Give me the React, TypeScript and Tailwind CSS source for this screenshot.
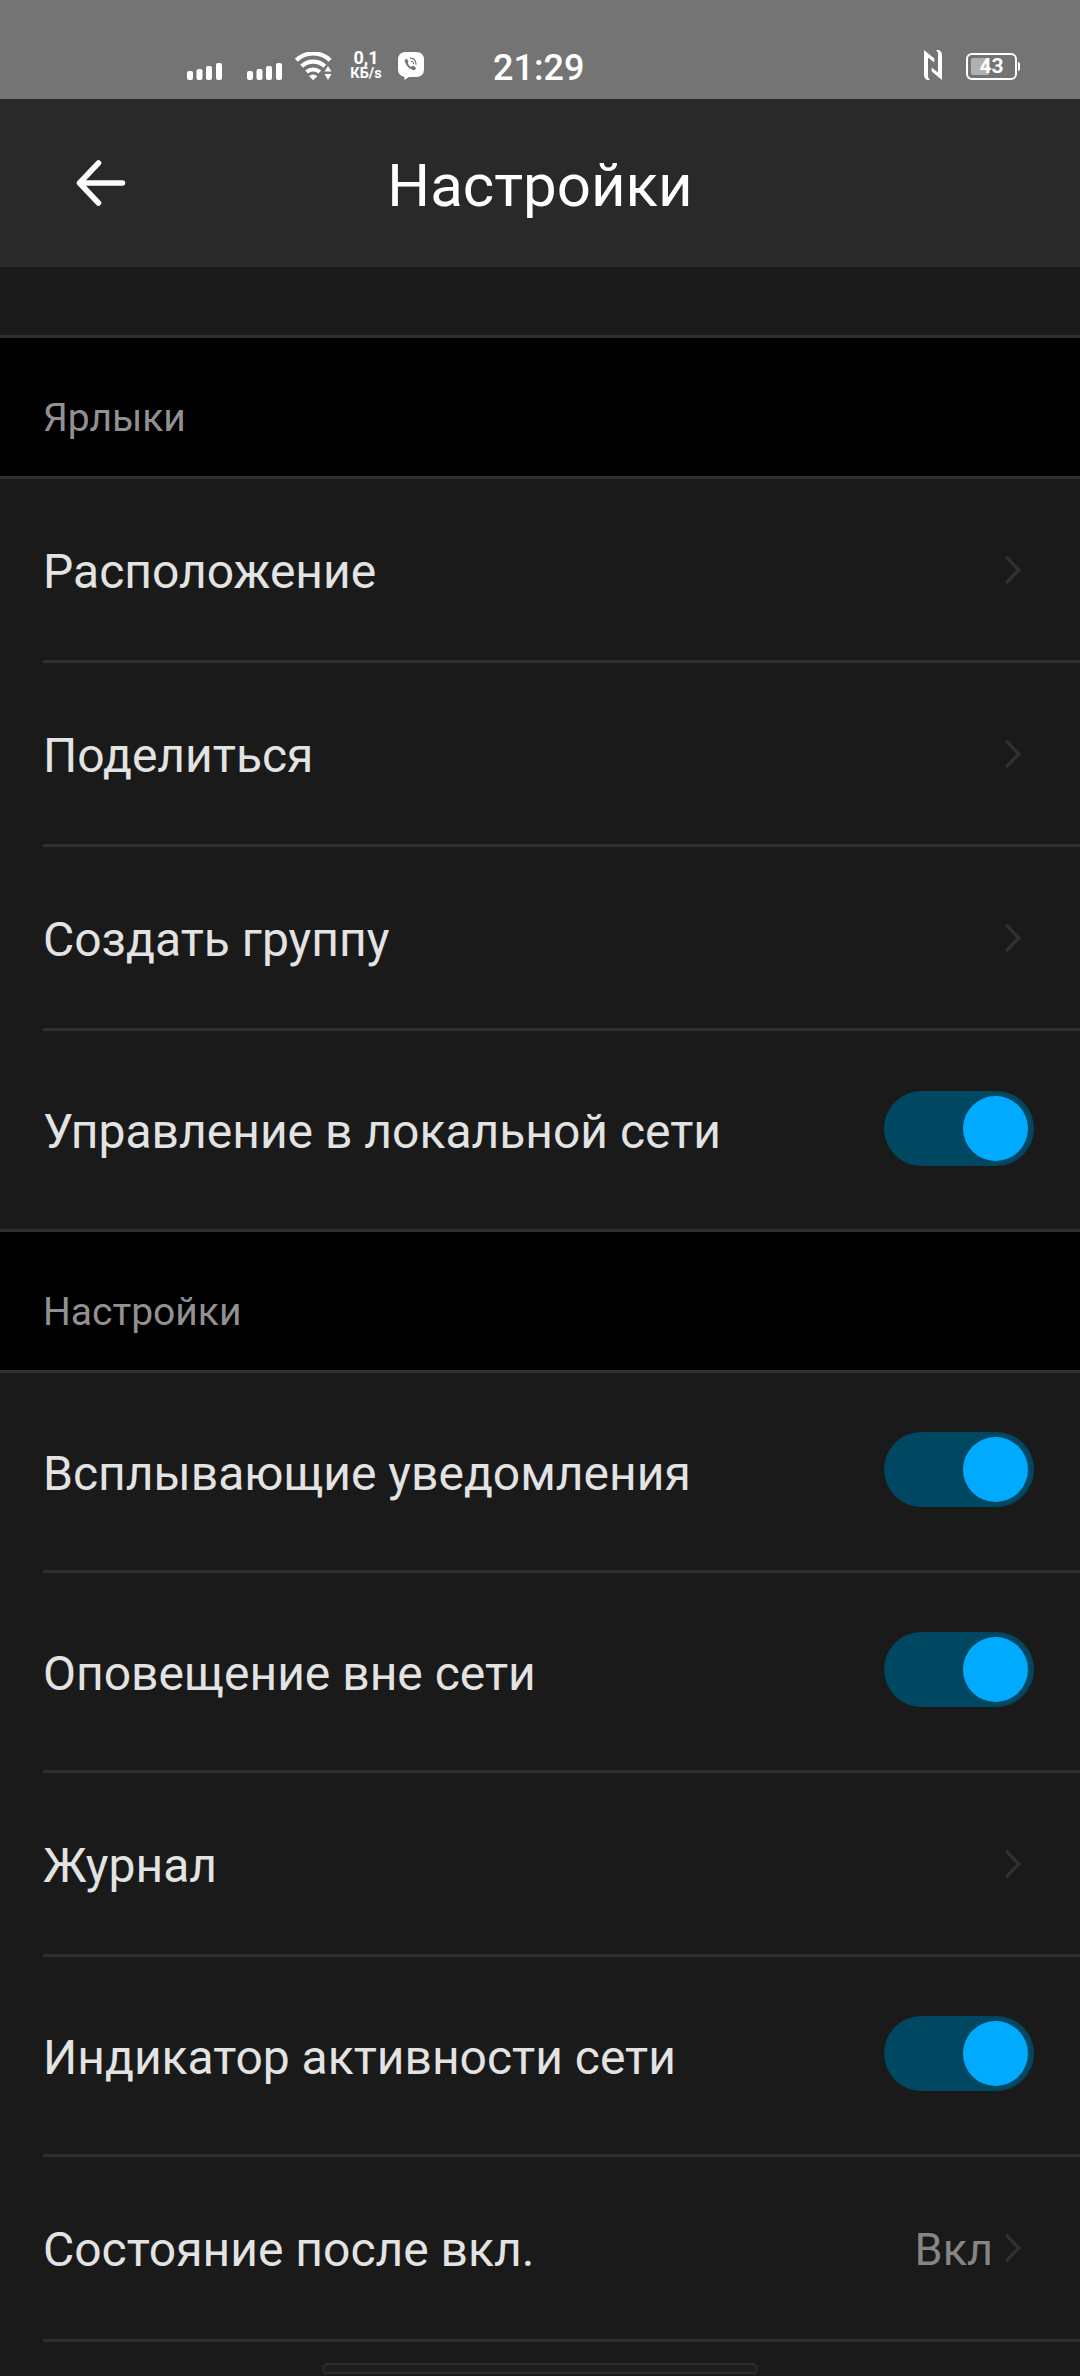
import React from 'react';

const signalBars = [
  { x: 0, h: 9 },
  { x: 9.5, h: 11 },
  { x: 19, h: 14 },
  { x: 29, h: 17 },
];

function Signal() {
  return (
    <svg width="36" height="17" viewBox="0 0 36 17" fill="#fff">
      {signalBars.map((b) => (
        <rect key={b.x} x={b.x} y={17 - b.h} width="6" height={b.h} rx="2" />
      ))}
    </svg>
  );
}

function Wifi() {
  return (
    <svg width="37" height="29" viewBox="0 0 37 29" fill="none" stroke="#fff" strokeWidth="4.2">
      <path d="M1.3 8.2a24.5 24.5 0 0 1 33.8 0" />
      <path d="M6.6 14.2a17 17 0 0 1 23.2 0" />
      <path d="M11.6 20a10 10 0 0 1 13.2 0" />
      <path d="M14 24q4.2-3 8.4 0L18.2 28.200z" fill="#fff" stroke="none" />
      <path d="M29.500 19.500h7L33 14zM29.500 22h7L33 28z" fill="#fff" stroke="none" />
    </svg>
  );
}

function Viber() {
  return (
    <svg width="26" height="28" viewBox="0 0 26 28">
      <path
        d="M8 0h10q8 0 8 8v9q0 8-8 8h-7l-4.600 3v-3.200Q0 24 0 17V8Q0 0 8 0z"
        fill="#fff"
      />
      <path
        d="M8.300 6.400l2 2.400q.5.800-.7 1.900c.7 2 1.800 3.300 3.900 4.100 1-1.300 1.600-1.200 2.400-.6l2 1.500q.6.700-.9 2.100c-.8.700-1.600.5-2.700 0-3.700-1.700-6.300-4.400-7.400-8-.3-1.200-.2-1.800.6-2.400z"
        fill="#747474"
      />
      <path d="M12.500 6.200q5.300.3 5.500 6M13.200 9q2.200.3 2.400 2.600" fill="none" stroke="#747474" strokeWidth="1.200" strokeLinecap="round" />
    </svg>
  );
}

function Nfc() {
  return (
    <svg width="18" height="30" viewBox="0 0 18 30" fill="#fff">
      <path d="M0 0L10.300 8.500V12.500L4 7.500V26Q4 28.500 6 30H3.500Q0 29 0 25z" />
      <path d="M18 30L7.700 21.500V17.500L14 22.500V4Q14 1.500 12 0H14.500Q18 1 18 5z" />
    </svg>
  );
}

function Battery() {
  return (
    <div className="flex items-center">
      <div className="relative flex h-[27px] w-[51px] items-center rounded-[6px] border-2 border-white p-[3px]">
        <div className="h-[17px] w-[18px] rounded-l-[2px] bg-[#b0b0b0]" />
        <span className="absolute inset-0 flex items-center justify-center text-[21px] leading-none font-bold">
          43
        </span>
      </div>
      <div className="ml-[1px] h-[9px] w-[2px] rounded-r bg-white" />
    </div>
  );
}

function StatusBar() {
  return (
    <div className="flex h-[99px] bg-[#747474] text-white">
      <div className="ml-[187px] flex w-[306px] items-start pt-[52px]">
        <div className="mt-[11px]"><Signal /></div>
        <div className="mt-[11px] ml-[24px]"><Signal /></div>
        <div className="ml-[12px]"><Wifi /></div>
        <div className="-mt-[2px] ml-[17px] flex w-[34px] flex-col items-center text-center font-bold">
          <span className="text-[18px] leading-[16px]">0,1</span>
          <span className="text-[14.500px] leading-[15px]">КБ/s</span>
        </div>
        <div className="ml-[15px]"><Viber /></div>
      </div>
      <div className="w-[91px] pt-[47px] text-[36px] leading-[42px] font-medium whitespace-nowrap">21:29</div>
      <div className="mt-[50px] ml-[340px]"><Nfc /></div>
      <div className="mt-[53px] ml-[24px]"><Battery /></div>
    </div>
  );
}

function Header() {
  return (
    <header className="flex h-[168px] items-center bg-[#292929]">
      <button className="ml-[76px] w-[50px]">
        <svg width="50" height="48" viewBox="0 0 50 48" fill="none" stroke="#fff" strokeWidth="5.500" strokeLinecap="round" strokeLinejoin="round">
          <path d="M22.500 4L3.500 24l19 20M4 24h42.500" />
        </svg>
      </button>
      <h1 className="mt-[5px] mr-[126px] flex-1 text-center text-[60px] leading-[70px] text-white">Настройки</h1>
    </header>
  );
}

function Chevron() {
  return (
    <svg width="16" height="28" viewBox="0 0 16 28" fill="none" stroke="#303030" strokeWidth="3.400" strokeLinecap="round" strokeLinejoin="miter">
      <path d="M2.200 2l11.600 12L2.200 26" />
    </svg>
  );
}

function Toggle() {
  return (
    <div className="mr-[46px] mb-[4px] flex h-[75px] w-[150px] items-center justify-end rounded-full bg-[#004861] pr-[6px]">
      <div className="h-[65px] w-[65px] rounded-full bg-[#00aaff]" />
    </div>
  );
}

type RowProps = {
  label: string;
  toggle?: boolean;
  value?: string;
  last?: boolean;
  height: string;
};

function Row({ label, toggle, value, last, height }: RowProps) {
  return (
    <div>
      <div className={`flex items-center justify-between pl-[43px] ${height}`}>
        <span className="mt-[4px] text-[48px] leading-[56px] whitespace-nowrap text-[#e3e3e3]">{label}</span>
        {toggle ? (
          <Toggle />
        ) : (
          <div className="mr-[59px] flex items-center gap-[12px]">
            {value && <span className="mt-[4px] text-[45px] leading-[54px] text-[#858585]">{value}</span>}
            <Chevron />
          </div>
        )}
      </div>
      <div className={last ? 'h-[3px] bg-[#303030]' : 'ml-[43px] h-[3px] bg-[#303030]'} />
    </div>
  );
}

function SectionTitle({ children }: { children: React.ReactNode }) {
  return (
    <div className="h-[141px] border-b-[3px] border-[#303030] bg-black pt-[55px] pl-[43px] text-[39px] leading-[50px] text-[#919191]">
      {children}
    </div>
  );
}

export default function App() {
  return (
    <div className="h-[2376px] w-[1080px] overflow-hidden bg-[#1a1a1a] font-['Roboto',sans-serif]">
      <StatusBar />
      <Header />
      <div className="h-[71px] border-b-[3px] border-[#303030]" />
      <SectionTitle>Ярлыки</SectionTitle>
      <Row label="Расположение" height="h-[181px]" />
      <Row label="Поделиться" height="h-[181px]" />
      <Row label="Создать группу" height="h-[181px]" />
      <Row label="Управление в локальной сети" toggle last height="h-[198px]" />
      <SectionTitle>Настройки</SectionTitle>
      <Row label="Всплывающие уведомления" toggle height="h-[197px]" />
      <Row label="Оповещение вне сети" toggle height="h-[197px]" />
      <Row label="Журнал" height="h-[181px]" />
      <Row label="Индикатор активности сети" toggle height="h-[197px]" />
      <Row label="Состояние после вкл." value="Вкл" height="h-[182px]" />
      <div className="mx-auto mt-[21px] h-[11px] w-[436px] rounded-full border-2 border-[#2c2c2c] bg-[#1e1e1e]" />
    </div>
  );
}
